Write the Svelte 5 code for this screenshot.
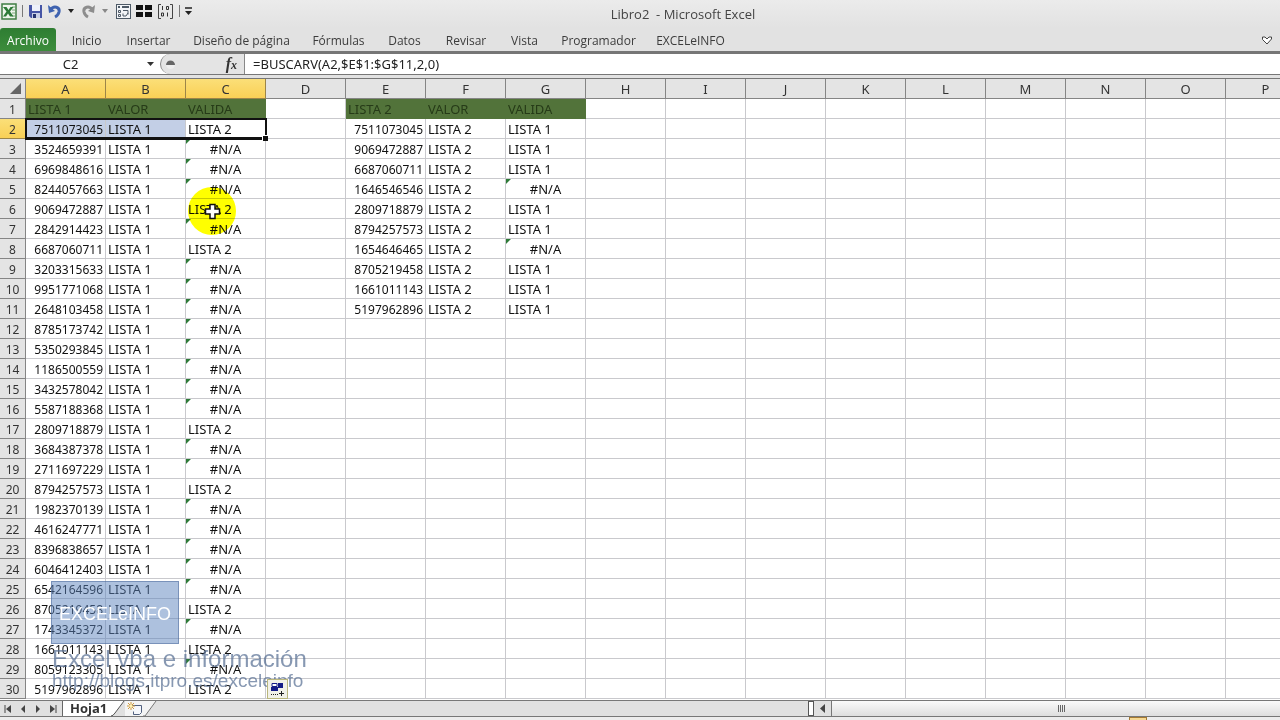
<script>
  const letters = 'ABCDEFGHIJKLMNOP'.split('');
  const tabs = [
    { name: 'Inicio', w: 61 },
    { name: 'Insertar', w: 63 },
    { name: 'Diseño de página', w: 123 },
    { name: 'Fórmulas', w: 71 },
    { name: 'Datos', w: 61 },
    { name: 'Revisar', w: 62 },
    { name: 'Vista', w: 55 },
    { name: 'Programador', w: 93 },
    { name: 'EXCELeINFO', w: 91 }
  ];
  const first = [
    7511073045, 3524659391, 6969848616, 8244057663, 9069472887, 2842914423,
    6687060711, 3203315633, 9951771068, 2648103458, 8785173742, 5350293845,
    1186500559, 3432578042, 5587188368, 2809718879, 3684387378, 2711697229,
    8794257573, 1982370139, 4616247771, 8396838657, 6046412403, 6542164596,
    8705219458, 1743345372, 1661011143, 8059123305, 5197962896
  ];
  const second = [
    7511073045, 9069472887, 6687060711, 1646546546, 2809718879,
    8794257573, 1654646465, 8705219458, 1661011143, 5197962896
  ];
  const NA = '#N/A';
  // Values whose lookup fails although the other list holds them are not expected here.
  const lookup = (value, list, label) => (list.includes(value) ? label : NA);

  const rows = Array.from({ length: 30 }, (_, i) => {
    const cells = {};
    if (i === 0) {
      Object.assign(cells, { A: 'LISTA 1', B: 'VALOR', C: 'VALIDA', E: 'LISTA 2', F: 'VALOR', G: 'VALIDA' });
    } else {
      const a = first[i - 1];
      const e = second[i - 1];
      if (a) Object.assign(cells, { A: a, B: 'LISTA 1', C: lookup(a, second, 'LISTA 2') });
      if (e) Object.assign(cells, { E: e, F: 'LISTA 2', G: lookup(e, first, 'LISTA 1') });
    }
    return { n: i + 1, cells };
  });
  let formula = $state('=BUSCARV(A2,$E$1:$G$11,2,0)');
  let cellName = $state('C2');
</script>

<div class="app">
  <header class="titlebar">
    <div class="quick">
      <svg width="16" height="17" viewBox="0 0 16 17"><rect x="1" y="1" width="14" height="15" fill="#eef5ec" stroke="#3f7d43" stroke-width="1.500"/><path d="M11 4h3M11 7h3M11 10h3M11 13h3" stroke="#7aa67b"/><path d="M2 4h3.500L7.500 7l2-3h3L9 8.500l3.500 5H9l-2-3-2 3H2l3.500-5z" fill="#2d7a37"/></svg>
      <i class="bar"></i>
      <button aria-label="Guardar"><svg width="15" height="15" viewBox="0 0 15 15"><path d="M1 1h13v13H3l-2-2z" fill="#4655a5"/><path d="M4 1h8v6H4z" fill="#eef1fa"/><path d="M4 9h8v5H4z" fill="#c9d0e6"/><path d="M5 10h3v4H5z" fill="#26336f"/></svg></button>
      <button class="undo" aria-label="Deshacer"><svg width="13" height="15" viewBox="0 0 13 15"><path d="M2 6c4-5 10-3 9 2-.5 2-2 4-4 5" fill="none" stroke="#3f63b0" stroke-width="3"/><path d="M0 1l1 8 6-2z" fill="#3f63b0"/></svg><svg class="drop" width="6" height="4" viewBox="0 0 6 4"><path d="M0 0h6L3 4z" fill="#222"/></svg></button>
      <button class="undo" aria-label="Rehacer"><svg width="13" height="15" viewBox="0 0 13 15"><path d="M11 6C7 1 1 3 2 8c.5 2 2 4 4 5" fill="none" stroke="#8d8d8d" stroke-width="3"/><path d="M13 1l-1 8-6-2z" fill="#8d8d8d"/></svg><svg class="drop" width="6" height="4" viewBox="0 0 6 4"><path d="M0 0h6L3 4z" fill="#888"/></svg></button>
      <button aria-label="Formulario"><svg width="15" height="15" viewBox="0 0 15 15"><rect x=".5" y=".5" width="14" height="14" fill="#f2f4f7" stroke="#4d5966"/><path d="M2 3h2M6 3h7" stroke="#4d5966" stroke-width="2"/><path d="M2.500 6.500h2v2h-2zM2.500 10.500h2v2h-2zM7 6.500h5v4M12 9l-2 3H7V9.500" fill="none" stroke="#4d5966"/></svg></button>
      <button aria-label="Inmovilizar"><svg width="16" height="14" viewBox="0 0 16 14"><path d="M0 1h7v5H0zM9 1h7v5H9zM0 8h7v5H0zM9 8h7v5H9z" fill="#111"/></svg></button>
      <button aria-label="Matriz"><svg width="17" height="17" viewBox="0 0 17 17"><path d="M4 1.500H1.500v14H4M13 1.500h2.500v14H13" fill="none" stroke="#444"/><path d="M5.500 3v4M4.500 10h2v3h-2zM9.500 3.500h2v3h-2zM10.500 9.500v4" fill="none" stroke="#333"/></svg></button>
      <i class="bar"></i>
      <button aria-label="Personalizar"><svg width="7" height="8" viewBox="0 0 7 8"><path d="M0 1h7" stroke="#222" stroke-width="1.500"/><path d="M0 4h7L3.500 8z" fill="#222"/></svg></button>
    </div>
    <h1>Libro2&nbsp; - Microsoft Excel</h1>
  </header>

  <nav class="ribbon">
    <button class="file">Archivo</button>
    {#each tabs as t}<button style:width="{t.w}px">{t.name}</button>{/each}
    <button class="collapse" aria-label="Expandir"><svg width="10" height="9" viewBox="0 0 10 9"><path d="M.5 1h2.500l2 2 2-2h2.500v2L5 8 .5 3.500z" fill="#fff" stroke="#444"/></svg></button>
  </nav>

  <div class="formula">
    <input class="name" aria-label="Cuadro de nombres" bind:value={cellName} />
    <button class="namedrop" aria-label="Nombres"><svg width="7" height="4" viewBox="0 0 7 4"><path d="M0 0h7L3.500 4z" fill="#333"/></svg></button>
    <button class="fx" aria-label="Insertar función"><svg class="knob" width="9" height="9" viewBox="0 0 9 9"><circle cx="4.500" cy="4.500" r="4.500" fill="#eee"/><path d="M0 5a4.500 4.500 0 0 1 9 0z" fill="#666"/></svg><span>f<small>x</small></span></button>
    <input class="expr" aria-label="Barra de fórmulas" bind:value={formula} />
  </div>

  <main class="sheet">
    <table>
      <colgroup><col class="rowcol" />{#each letters as l}<col class="datacol" />{/each}</colgroup>
      <thead>
        <tr>
          <th class="corner" aria-label="Seleccionar todo"><svg width="11" height="11" viewBox="0 0 11 11"><path d="M11 0v11H0z" fill="#666"/></svg></th>
          {#each letters as l, i}<th class:on={i < 3}>{l}</th>{/each}
        </tr>
      </thead>
      <tbody>
        {#each rows as r}
          <tr>
            <th class:on={r.n === 2}>{r.n}</th>
            {#each letters as l}
              <td
                class:head={r.n === 1 && r.cells[l]}
                class:num={typeof r.cells[l] === 'number'}
                class:err={r.cells[l] === NA}
                class:sel={r.n === 2 && (l === 'A' || l === 'B')}
              >{r.cells[l] ?? ''}</td>
            {/each}
          </tr>
        {/each}
      </tbody>
    </table>
    <div class="selection"><i></i></div>
    <div class="spot"></div>
    <svg class="cursor" width="17" height="17" viewBox="0 0 17 17"><path d="M6 1.500h5V6h4.500v5H11v4.500H6V11H1.500V6H6z" fill="#fff" stroke="#111" stroke-width="1.500"/></svg>
    <div class="mark">EXCELeINFO</div>
    <div class="credits"><strong>Excel vba e información</strong><span>http://blogs.itpro.es/exceleinfo</span></div>
    <svg class="autofill" width="21" height="20" viewBox="0 0 21 20"><rect x=".5" y=".5" width="20" height="19" fill="#f1f1e8" stroke="#b9b67c"/><path d="M4 8h7v4H4zM11 4h5v5h-5z" fill="#151c86"/><path d="M5 4.500h5v3H5z" fill="#fff" stroke="#151c86"/><path d="M4 15.500h8" stroke="#222" stroke-dasharray="1 1"/><path d="M12 14.500h5M14.500 12v5" stroke="#222"/></svg>
  </main>

  <footer class="bottom">
    <div class="navs">
      <button aria-label="Primera hoja"><svg width="8" height="8" viewBox="0 0 8 8"><path d="M1 0v8" stroke="#444"/><path d="M7 0v8L2 4z" fill="#444"/></svg></button>
      <button aria-label="Hoja anterior"><svg width="8" height="8" viewBox="0 0 8 8"><path d="M6 0v8L2 4z" fill="#444"/></svg></button>
      <button aria-label="Hoja siguiente"><svg width="8" height="8" viewBox="0 0 8 8"><path d="M2 0v8l4-4z" fill="#444"/></svg></button>
      <button aria-label="Última hoja"><svg width="8" height="8" viewBox="0 0 8 8"><path d="M7 0v8" stroke="#444"/><path d="M1 0v8l5-4z" fill="#444"/></svg></button>
    </div>
    <button class="tab">Hoja1</button>
    <svg width="14" height="16" viewBox="0 0 14 16"><path d="M0 0h13L4 12q-2 3-4 3z" fill="#fff"/><path d="M13 0L4 12q-2 3-4 3" fill="none" stroke="#555"/></svg>
    <button class="new" aria-label="Insertar hoja"><svg width="15" height="13" viewBox="0 0 15 13"><path d="M3.500 3.500h11v7l-2 2h-6v-3" fill="#f5f7fb" stroke="#52617f"/><path d="M4 0v8M0 4h8M1 1l6 6M7 1L1 7" stroke="#d09a3c"/><circle cx="4" cy="4" r="1.500" fill="#fff2b0"/></svg></button>
    <svg width="14" height="16" viewBox="0 0 14 16"><path d="M0 0h13L2 15H0z" fill="#f4f4f4"/><path d="M13 0L2 15H0" fill="none" stroke="#777"/></svg>
    <div class="scroll">
      <i class="split"></i>
      <button aria-label="Desplazar a la izquierda"><svg width="5" height="9" viewBox="0 0 5 9"><path d="M5 0v9L0 4.500z" fill="#444"/></svg></button>
      <div class="thumb"><svg width="8" height="7" viewBox="0 0 8 7"><path d="M.5 0v7M2.500 0v7M4.500 0v7M6.500 0v7" stroke="#666"/></svg></div>
    </div>
  </footer>
  <div class="status"><i></i></div>
</div>

<style>
  :global(body) { margin: 0; overflow: hidden; }
  .app { display: flex; flex-direction: column; height: 100vh; background: #e2e2e2; font-family: "Open Sans", sans-serif; font-size: 12px; color: #333; }
  .app * { box-sizing: border-box; }
  button { border: 0; padding: 0; margin: 0; background: none; font: inherit; color: inherit; display: flex; align-items: center; justify-content: center; white-space: nowrap; }
  svg { display: block; flex: none; }
  .titlebar { position: relative; height: 28px; flex: none; background: linear-gradient(#ebebeb, #e2e2e2); }
  .quick { display: flex; align-items: center; gap: 5px; height: 22px; padding-left: 1px; }
  .bar { width: 1px; height: 12px; background: #777; }
  .undo { gap: 7px; margin-right: 3px; }
  h1 { position: absolute; left: 0; right: 0; top: 4px; margin: 0; padding-left: 86px; text-align: center; font-size: 13px; line-height: 20px; font-weight: 400; color: #444; pointer-events: none; }
  .ribbon { display: flex; height: 26px; flex: none; border-bottom: 3px solid #767676; color: #3c3c3c; }
  .ribbon button { padding-top: 1px; }
  .ribbon .file { width: 56px; background: linear-gradient(#2e7d32, #3c8d3c); color: #fff; border-radius: 3px 3px 0 0; }
  .ribbon .collapse { margin-left: auto; width: 26px; }
  .formula { display: flex; height: 21px; flex: none; background: #fff; border-bottom: 1px solid #777; }
  input { border: 0; padding: 0; margin: 0; background: none; outline: 0; color: #222; font-family: "Noto Sans", sans-serif; font-size: 13px; min-width: 0; }
  .name { width: 141px; text-align: center; }
  .namedrop { width: 19px; }
  .fx { width: 85px; justify-content: space-between; padding: 0 7px 0 5px; background: #e4e4e4; border: 1px solid #888; border-width: 0 1px; border-radius: 10px 0 0 10px; }
  .fx span { font-family: "Liberation Serif", serif; font-size: 16px; line-height: 16px; font-weight: 700; font-style: italic; }
  .fx small { font-size: 12px; }
  .expr { flex: 1; padding-left: 8px; }
  .sheet { position: relative; flex: 1; min-height: 0; overflow: hidden; margin-top: 3px; border-top: 1px solid #777; background: #fff; }
  table { border-collapse: separate; border-spacing: 0; table-layout: fixed; width: 100%; min-width: 1306px; font-family: "Noto Sans", sans-serif; font-size: 13px; line-height: 17px; color: #111; }
  .rowcol { width: 26px; }
  .datacol { width: 80px; }
  .datacol:last-child { width: auto; }
  th, td { height: 20px; padding: 2px 2px 0; overflow: hidden; white-space: nowrap; text-align: left; border-right: 1px solid #c9c9cd; border-bottom: 1px solid #c9c9cd; }
  th { background: #e4e4e4; border-color: #858585; font-size: 12px; font-weight: 400; color: #333; text-align: center; }
  thead th { font-size: 13px; }
  th.on { background: linear-gradient(#fbdf78, #f9d056); border-color: #9c8548; }
  .corner { padding: 0 4px 0 10px; }
  td.head { background: #52733a; border-color: #52733a; color: #263b18; }
  td.num { text-align: right; font-size: 12px; }
  td.err { text-align: center; background: linear-gradient(135deg, #2d7a37 3px, transparent 4px); }
  td.sel { background: #c3cfe6; }
  .selection { position: absolute; left: 25px; top: 39px; width: 242px; height: 22px; border: 2px solid #111; border-bottom-width: 3px; }
  .selection i { position: absolute; right: -3px; bottom: -4px; width: 6px; height: 6px; background: #111; border: solid #fff; border-width: 1px 0 0 1px; }
  .spot { position: absolute; left: 188px; top: 108px; width: 48px; height: 48px; border-radius: 50%; background: #ffff00; mix-blend-mode: multiply; }
  .cursor { position: absolute; left: 204px; top: 124px; }
  .mark { position: absolute; left: 51px; top: 502px; width: 128px; height: 63px; background: rgba(91, 132, 190, 0.5); border: 1px solid rgba(70, 100, 150, 0.5); color: #fff; font-family: "Liberation Sans", sans-serif; font-size: 18px; line-height: 64px; text-align: center; }
  .credits { position: absolute; left: 52px; top: 568px; display: flex; flex-direction: column; font-family: "Liberation Sans", sans-serif; color: rgba(84, 108, 145, 0.7); }
  .credits strong { font-size: 24px; line-height: 24px; font-weight: 400; }
  .credits span { font-size: 19px; line-height: 20px; }
  .autofill { position: absolute; left: 267px; top: 600px; }
  .bottom { display: flex; height: 17px; flex: none; border-top: 1px solid #777; border-bottom: 1px solid #777; background: #e0e0e0; }
  .navs { display: flex; align-items: center; gap: 7px; width: 62px; padding-left: 4px; }
  .tab { width: 49px; height: 15px; justify-content: flex-start; padding-left: 7px; border-left: 1px solid #666; background: #fff; font-size: 13px; font-weight: 700; line-height: 15px; }
  .new { width: 18px; background: #f4f4f4; }
  .scroll { display: flex; align-items: stretch; flex: 0 0 472px; margin-left: auto; }
  .split { width: 6px; border: 1px solid #555; background: #fff; }
  .scroll button { width: 17px; }
  .thumb { flex: 1; display: flex; align-items: center; justify-content: center; padding-left: 12px; border-left: 1px solid #777; background: linear-gradient(#fafafa, #dedede); }
  .status { height: 3px; flex: none; background: #ececec; }
  .status i { display: block; margin-left: auto; margin-right: 133px; width: 18px; height: 3px; border: solid #a47932; border-width: 1px 1px 0; background: #f5d893; }
</style>
